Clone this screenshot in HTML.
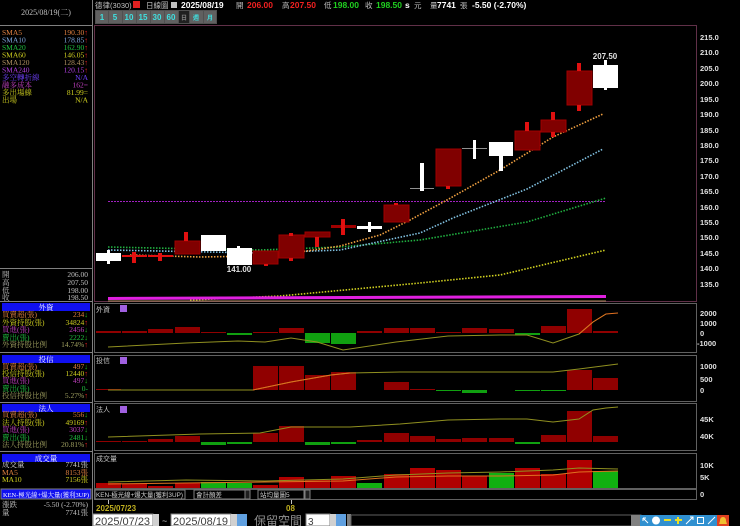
<!DOCTYPE html>
<html><head><meta charset="utf-8">
<style>
html,body{margin:0;padding:0;background:#000;width:740px;height:526px;overflow:hidden}
svg{display:block}
text{font-family:"Liberation Sans","Noto Sans CJK TC",sans-serif}
.lp text{font-family:"Liberation Serif","Noto Serif CJK SC",serif}
</style></head><body>
<svg width="740" height="526" viewBox="0 0 740 526" xmlns="http://www.w3.org/2000/svg">
<rect width="740" height="526" fill="#000"/>
<line x1="92.5" y1="0" x2="92.5" y2="526" stroke="#808080"/>
<g class="lp">
<text x="46" y="15" font-size="8" fill="#c0c0c0" text-anchor="middle">2025/08/19(二)</text>
<line x1="0" y1="25.5" x2="92" y2="25.5" stroke="#808080"/>
<g font-size="7.5">
<text x="2" y="35" fill="#e08040">SMA5</text><text x="88" y="35" fill="#e08040" text-anchor="end">190.30<tspan fill="#f02020">↑</tspan></text>
<text x="2" y="42.5" fill="#80a8e0">SMA10</text><text x="88" y="42.5" fill="#80a8e0" text-anchor="end">178.85<tspan fill="#f02020">↑</tspan></text>
<text x="2" y="50" fill="#20c040">SMA20</text><text x="88" y="50" fill="#20c040" text-anchor="end">162.90<tspan fill="#f02020">↑</tspan></text>
<text x="2" y="57.5" fill="#d0d020">SMA60</text><text x="88" y="57.5" fill="#d0d020" text-anchor="end">146.05<tspan fill="#f02020">↑</tspan></text>
<text x="2" y="65" fill="#b09060">SMA120</text><text x="88" y="65" fill="#b09060" text-anchor="end">128.43<tspan fill="#f02020">↑</tspan></text>
<text x="2" y="72.5" fill="#b040e0">SMA240</text><text x="88" y="72.5" fill="#b040e0" text-anchor="end">120.15<tspan fill="#f02020">↑</tspan></text>
<text x="2" y="80" fill="#7040ff">多空轉折線</text><text x="88" y="80" fill="#7040ff" text-anchor="end">N/A</text>
<text x="2" y="87.5" fill="#c040c0">融多成本</text><text x="88" y="87.5" fill="#c040c0" text-anchor="end">162=</text>
<text x="2" y="95" fill="#d0d020">多出場線</text><text x="88" y="95" fill="#d0d020" text-anchor="end">81.99=</text>
<text x="2" y="102.5" fill="#d0d020">出場</text><text x="88" y="102.5" fill="#d0d020" text-anchor="end">N/A</text>
</g>
<line x1="0" y1="268.5" x2="92" y2="268.5" stroke="#808080"/>
<g font-size="7.5" fill="#c0c0c0">
<text x="2" y="277">開</text><text x="88" y="277" text-anchor="end">206.00</text>
<text x="2" y="285">高</text><text x="88" y="285" text-anchor="end">207.50</text>
<text x="2" y="293">低</text><text x="88" y="293" text-anchor="end">198.00</text>
<text x="2" y="300">收</text><text x="88" y="300" text-anchor="end">198.50</text>
</g>
<g font-size="7.5">
<line x1="0" y1="301.5" x2="92" y2="301.5" stroke="#808080"/>
<rect x="2" y="303" width="88" height="8" fill="#1010f0"/><text x="46" y="310" fill="#fff" text-anchor="middle">外資</text>
<text x="2" y="317" fill="#e08040">買賣超(張)</text><text x="88" y="317" fill="#e08040" text-anchor="end">234<tspan fill="#20c020">↓</tspan></text>
<text x="2" y="325" fill="#d0d020">外資持股(張)</text><text x="88" y="325" fill="#d0d020" text-anchor="end">34824<tspan fill="#f02020">↑</tspan></text>
<text x="2" y="332" fill="#c040c0">買進(張)</text><text x="88" y="332" fill="#c040c0" text-anchor="end">2456<tspan fill="#20c020">↓</tspan></text>
<text x="2" y="340" fill="#20c040">賣出(張)</text><text x="88" y="340" fill="#20c040" text-anchor="end">2222<tspan fill="#20c020">↓</tspan></text>
<text x="2" y="347" fill="#a0a060">外資持股比例</text><text x="88" y="347" fill="#a0a060" text-anchor="end">14.74%<tspan fill="#f02020">↑</tspan></text>
<line x1="0" y1="352.5" x2="92" y2="352.5" stroke="#808080"/>
<rect x="2" y="355" width="88" height="8" fill="#1010f0"/><text x="46" y="362" fill="#fff" text-anchor="middle">投信</text>
<text x="2" y="369" fill="#e08040">買賣超(張)</text><text x="88" y="369" fill="#e08040" text-anchor="end">497<tspan fill="#20c020">↓</tspan></text>
<text x="2" y="376" fill="#d0d020">投信持股(張)</text><text x="88" y="376" fill="#d0d020" text-anchor="end">12440<tspan fill="#f02020">↑</tspan></text>
<text x="2" y="383" fill="#c040c0">買進(張)</text><text x="88" y="383" fill="#c040c0" text-anchor="end">497<tspan fill="#20c020">↓</tspan></text>
<text x="2" y="391" fill="#20c040">賣出(張)</text><text x="88" y="391" fill="#20c040" text-anchor="end">0-</text>
<text x="2" y="398" fill="#a0a060">投信持股比例</text><text x="88" y="398" fill="#a0a060" text-anchor="end">5.27%<tspan fill="#f02020">↑</tspan></text>
<line x1="0" y1="402.5" x2="92" y2="402.5" stroke="#808080"/>
<rect x="2" y="404" width="88" height="8" fill="#1010f0"/><text x="46" y="411" fill="#fff" text-anchor="middle">法人</text>
<text x="2" y="417" fill="#e08040">買賣超(張)</text><text x="88" y="417" fill="#e08040" text-anchor="end">556<tspan fill="#20c020">↓</tspan></text>
<text x="2" y="425" fill="#d0d020">法人持股(張)</text><text x="88" y="425" fill="#d0d020" text-anchor="end">49169<tspan fill="#f02020">↑</tspan></text>
<text x="2" y="432" fill="#c040c0">買進(張)</text><text x="88" y="432" fill="#c040c0" text-anchor="end">3037<tspan fill="#20c020">↓</tspan></text>
<text x="2" y="440" fill="#20c040">賣出(張)</text><text x="88" y="440" fill="#20c040" text-anchor="end">2481<tspan fill="#20c020">↓</tspan></text>
<text x="2" y="447" fill="#a0a060">法人持股比例</text><text x="88" y="447" fill="#a0a060" text-anchor="end">20.81%<tspan fill="#f02020">↑</tspan></text>
<line x1="0" y1="451.5" x2="92" y2="451.5" stroke="#808080"/>
<rect x="2" y="454" width="88" height="8" fill="#1010f0"/><text x="46" y="461" fill="#fff" text-anchor="middle">成交量</text>
<text x="2" y="467" fill="#d0d0d0">成交量</text><text x="88" y="467" fill="#d0d0d0" text-anchor="end">7741張</text>
<text x="2" y="475" fill="#e08040">MA5</text><text x="88" y="475" fill="#e08040" text-anchor="end">8153張</text>
<text x="2" y="482" fill="#d0d020">MA10</text><text x="88" y="482" fill="#d0d020" text-anchor="end">7156張</text>
<rect x="1" y="489" width="90" height="10" fill="#1010f0" stroke="#808080"/><text x="3" y="497" fill="#fff" font-size="6.5" textLength="86" lengthAdjust="spacingAndGlyphs">KEN-極光線+爆大量(獲利3UP)</text>
<text x="2" y="507" fill="#c0c0c0">漲跌</text><text x="88" y="507" fill="#c0c0c0" text-anchor="end">-5.50 (-2.70%)</text>
<text x="2" y="515" fill="#c0c0c0">量</text><text x="88" y="515" fill="#c0c0c0" text-anchor="end">7741張</text>
</g>
</g>
<g font-size="8.5" font-weight="bold">
<text x="95" y="8" fill="#c0c0c0" font-weight="normal" font-size="7.5">德律(3030)</text>
<rect x="133" y="1" width="7" height="7" fill="#e02020"/>
<text x="146" y="8" fill="#c0c0c0" font-weight="normal" font-size="7.5">日線圖</text>
<rect x="171" y="2" width="6" height="6" fill="#c0c0c0"/>
<text x="181" y="8" fill="#fff">2025/08/19</text>
<text x="236" y="8" fill="#c0c0c0" font-weight="normal" font-size="7.5">開</text><text x="247" y="8" fill="#f02020">206.00</text>
<text x="282" y="8" fill="#c0c0c0" font-weight="normal" font-size="7.5">高</text><text x="290" y="8" fill="#f02020">207.50</text>
<text x="324" y="8" fill="#c0c0c0" font-weight="normal" font-size="7.5">低</text><text x="333" y="8" fill="#20d020">198.00</text>
<text x="365" y="8" fill="#c0c0c0" font-weight="normal" font-size="7.5">收</text><text x="376" y="8" fill="#20d020">198.50</text>
<text x="405" y="8" fill="#fff">s</text><text x="414" y="8" fill="#c0c0c0" font-weight="normal" font-size="7.5">元</text>
<text x="430" y="8" fill="#c0c0c0" font-weight="normal" font-size="7.5">量</text><text x="437" y="8" fill="#fff">7741</text>
<text x="460" y="8" fill="#c0c0c0" font-weight="normal" font-size="7.5">張</text><text x="472" y="8" fill="#fff">-5.50 (-2.70%)</text>
</g>
<rect x="95" y="10" width="122" height="14" fill="#505050"/>
<g font-size="8" font-weight="bold" fill="#40e0e0" text-anchor="middle">
<rect x="96" y="11" width="12" height="12" fill="#606060"/><text x="102" y="20">1</text>
<rect x="109" y="11" width="13" height="12" fill="#606060"/><text x="115" y="20">5</text>
<rect x="123" y="11" width="13" height="12" fill="#606060"/><text x="129" y="20">10</text>
<rect x="137" y="11" width="13" height="12" fill="#606060"/><text x="143" y="20">15</text>
<rect x="151" y="11" width="13" height="12" fill="#606060"/><text x="157" y="20">30</text>
<rect x="165" y="11" width="13" height="12" fill="#606060"/><text x="171" y="20">60</text>
<rect x="179" y="11" width="10" height="12" fill="#202020"/><text x="184" y="20" fill="#808080" font-size="6">日</text>
<rect x="190" y="11" width="13" height="12" fill="#606060"/><text x="196" y="20" font-size="6">週</text>
<rect x="204" y="11" width="12" height="12" fill="#606060"/><text x="210" y="20" font-size="6">月</text>
</g>
<rect x="94.5" y="25.5" width="602" height="276" fill="none" stroke="#603048"/>
<rect x="94.5" y="303.5" width="602" height="49" fill="none" stroke="#606060"/>
<rect x="94.5" y="355.5" width="602" height="46" fill="none" stroke="#606060"/>
<rect x="94.5" y="403.5" width="602" height="47" fill="none" stroke="#606060"/>
<rect x="94.5" y="453.5" width="602" height="35" fill="none" stroke="#606060"/>
<rect x="94.5" y="489.5" width="602" height="10" fill="none" stroke="#606060"/>
<g font-size="7.5" font-weight="bold" fill="#e0e0e0">
<text x="700" y="40">215.0</text><text x="700" y="55">210.0</text><text x="700" y="71">205.0</text><text x="700" y="86">200.0</text><text x="700" y="102">195.0</text><text x="700" y="117">190.0</text><text x="700" y="133">185.0</text><text x="700" y="148">180.0</text><text x="700" y="163">175.0</text><text x="700" y="179">170.0</text><text x="700" y="194">165.0</text><text x="700" y="210">160.0</text><text x="700" y="225">155.0</text><text x="700" y="240">150.0</text><text x="700" y="256">145.0</text><text x="700" y="271">140.0</text><text x="700" y="287">135.0</text>
<text x="700" y="316">2000</text><text x="700" y="326">1000</text><text x="700" y="336">0</text><text x="697" y="346">-1000</text>
<text x="700" y="369">1000</text><text x="700" y="382">500</text><text x="700" y="393">0</text>
<text x="700" y="422">45K</text><text x="700" y="439">40K</text>
<text x="700" y="468">10K</text><text x="700" y="480">5K</text><text x="700" y="497">0</text>
</g>
<line x1="108" y1="201.5" x2="606" y2="201.5" stroke="#a020c0" stroke-dasharray="2 1"/>
<polyline fill="none" stroke="#d0d020" stroke-width="1.6" stroke-dasharray="1.5 1.5" points="190,300 280,296 420,283 500,275 606,250"/>
<polyline fill="none" stroke="#20b040" stroke-width="1.6" stroke-dasharray="1.5 1.5" points="108,247 200,249 260,250 340,247 420,240 527,222 606,198"/>
<polyline fill="none" stroke="#80c0e0" stroke-width="1.6" stroke-dasharray="1.5 1.5" points="108,250 260,253 340,250 420,233 453,218 527,189 603,149"/>
<polyline fill="none" stroke="#f0a040" stroke-width="1.6" stroke-dasharray="1.5 1.5" points="130,255 200,257 260,256 300,252 340,246 380,235 410,220 447,200 500,170 553,137 603,114"/>
<line x1="108" y1="298.5" x2="606" y2="296.5" stroke="#e020e0" stroke-width="3"/>
<line x1="108" y1="301" x2="606" y2="301" stroke="#b09060" stroke-width="1"/>
<g>
<rect x="96" y="253" width="25" height="8" fill="#fff"/><rect x="107" y="250" width="3" height="14" fill="#fff"/>
<rect x="122" y="255" width="25" height="2" fill="#e01010"/><rect x="132" y="252" width="4" height="11" fill="#e01010"/>
<rect x="148" y="255" width="25" height="2" fill="#e01010"/><rect x="158" y="253" width="4" height="8" fill="#e01010"/>
<rect x="175" y="241" width="25" height="13" fill="#800000" stroke="#a00000"/><rect x="184" y="232" width="4" height="9" fill="#e01010"/>
<rect x="201" y="235" width="25" height="16" fill="#fff"/>
<rect x="227" y="248" width="25" height="17" fill="#fff"/><rect x="237" y="246" width="3" height="3" fill="#fff"/>
<text x="239" y="272" font-size="8" font-weight="bold" fill="#e0e0e0" text-anchor="middle">141.00</text>
<rect x="253" y="251" width="25" height="13" fill="#800000" stroke="#a00000"/><rect x="264" y="264" width="4" height="2" fill="#e01010"/>
<rect x="279" y="235" width="25" height="23" fill="#800000" stroke="#a00000"/><rect x="289" y="233" width="4" height="3" fill="#e01010"/><rect x="289" y="258" width="4" height="3" fill="#e01010"/>
<rect x="305" y="232" width="25" height="5" fill="#800000" stroke="#a00000"/><rect x="315" y="237" width="4" height="10" fill="#e01010"/>
<rect x="331" y="225" width="25" height="3" fill="#a00000"/><rect x="341" y="219" width="4" height="16" fill="#e01010"/>
<rect x="357" y="226" width="25" height="3" fill="#fff"/><rect x="368" y="222" width="3" height="10" fill="#fff"/>
<rect x="384" y="205" width="25" height="17" fill="#800000" stroke="#a00000"/><rect x="394" y="203" width="4" height="2" fill="#e01010"/>
<line x1="410" y1="188.5" x2="434" y2="188.5" stroke="#909090"/><rect x="420" y="163" width="4" height="28" fill="#fff"/>
<rect x="436" y="149" width="25" height="37" fill="#800000" stroke="#a00000"/><rect x="446" y="186" width="4" height="3" fill="#e01010"/>
<line x1="462" y1="148.5" x2="487" y2="148.5" stroke="#909090"/><rect x="473" y="140" width="3" height="19" fill="#fff"/>
<rect x="489" y="142" width="24" height="14" fill="#fff"/><rect x="499" y="156" width="4" height="15" fill="#fff"/>
<rect x="515" y="131" width="25" height="19" fill="#800000" stroke="#a00000"/><rect x="525" y="122" width="4" height="9" fill="#e01010"/>
<rect x="541" y="120" width="25" height="12" fill="#800000" stroke="#a00000"/><rect x="551" y="112" width="4" height="8" fill="#e01010"/><rect x="551" y="132" width="4" height="5" fill="#e01010"/>
<rect x="567" y="71" width="25" height="34" fill="#800000" stroke="#a00000"/><rect x="577" y="63" width="4" height="8" fill="#e01010"/><rect x="577" y="105" width="4" height="6" fill="#e01010"/>
<rect x="593" y="65" width="25" height="23" fill="#fff"/><rect x="604" y="60" width="3" height="30" fill="#fff"/>
<text x="605" y="59" font-size="8" font-weight="bold" fill="#e0e0e0" text-anchor="middle">207.50</text>
</g>
<g font-size="7" fill="#c0c0c0">
<text x="96" y="312">外資</text><rect x="120" y="305" width="7" height="7" fill="#a060e0"/>
<text x="96" y="363">投信</text><rect x="120" y="357" width="7" height="7" fill="#a060e0"/>
<text x="96" y="412">法人</text><rect x="120" y="406" width="7" height="7" fill="#a060e0"/>
<text x="96" y="461">成交量</text>
</g>
<g fill="#900000">
<rect x="96" y="331" width="25" height="2"/><rect x="122" y="331" width="25" height="2"/><rect x="148" y="329" width="25" height="4"/><rect x="175" y="327" width="25" height="6"/><rect x="201" y="332" width="25" height="1"/>
<rect x="253" y="332" width="25" height="1"/><rect x="279" y="328" width="25" height="5"/><rect x="357" y="331" width="25" height="2"/><rect x="384" y="328" width="25" height="5"/><rect x="410" y="328" width="25" height="5"/><rect x="436" y="332" width="25" height="1"/><rect x="462" y="328" width="25" height="5"/><rect x="489" y="329" width="25" height="4"/><rect x="541" y="326" width="25" height="7"/><rect x="567" y="309" width="25" height="24"/><rect x="593" y="331" width="25" height="2"/>
</g>
<g fill="#10a010">
<rect x="227" y="333" width="25" height="2"/><rect x="305" y="333" width="25" height="10"/><rect x="331" y="333" width="25" height="11"/><rect x="515" y="333" width="25" height="2"/>
</g>
<polyline fill="none" stroke="#909020" points="108,347 186,343 238,341 265,342 291,338 317,342 343,350 396,342 448,336 500,335 527,335 553,343 579,334 593,322 606,314"/>
<polyline fill="none" stroke="#e07020" points="579,334 593,322 606,314 618,313"/>
<g fill="#900000">
<rect x="253" y="366" width="25" height="24"/><rect x="279" y="366" width="25" height="24"/><rect x="305" y="375" width="25" height="15"/><rect x="331" y="372" width="25" height="18"/><rect x="384" y="382" width="25" height="8"/><rect x="410" y="389" width="25" height="1"/><rect x="567" y="370" width="25" height="20"/><rect x="593" y="378" width="25" height="12"/>
<rect x="96" y="389" width="25" height="1"/>
</g>
<g fill="#10a010">
<rect x="436" y="390" width="25" height="1"/><rect x="462" y="390" width="25" height="3"/><rect x="515" y="390" width="25" height="1"/><rect x="541" y="390" width="25" height="1"/>
</g>
<polyline fill="none" stroke="#909020" points="108,390 227,390 253,390 291,382 331,375 350,373 400,372 553,372 579,369 618,364"/>
<polyline fill="none" stroke="#e07020" points="253,390 291,382 331,375 350,373"/>
<g fill="#900000">
<rect x="96" y="441" width="25" height="1"/><rect x="122" y="441" width="25" height="1"/><rect x="148" y="439" width="25" height="3"/><rect x="175" y="436" width="25" height="6"/>
<rect x="253" y="433" width="25" height="9"/><rect x="279" y="426" width="25" height="16"/><rect x="357" y="440" width="25" height="2"/><rect x="384" y="433" width="25" height="9"/><rect x="410" y="436" width="25" height="6"/><rect x="436" y="439" width="25" height="3"/><rect x="462" y="438" width="25" height="4"/><rect x="489" y="438" width="25" height="4"/><rect x="541" y="435" width="25" height="7"/><rect x="567" y="411" width="25" height="31"/><rect x="593" y="436" width="25" height="6"/>
</g>
<g fill="#10a010">
<rect x="201" y="442" width="25" height="3"/><rect x="227" y="442" width="25" height="2"/><rect x="305" y="442" width="25" height="3"/><rect x="331" y="442" width="25" height="2"/><rect x="515" y="442" width="25" height="2"/>
</g>
<polyline fill="none" stroke="#909020" points="108,437 200,434 260,433 291,427 350,427 400,424 448,420 500,419 527,419 553,422 579,419 593,410 606,408 618,407"/>
<g fill="#b00000">
<rect x="96" y="483" width="25" height="5"/><rect x="122" y="484" width="25" height="4"/><rect x="148" y="486" width="25" height="2"/><rect x="175" y="483" width="25" height="5"/>
<rect x="253" y="485" width="25" height="3"/><rect x="279" y="477" width="25" height="11"/><rect x="305" y="480" width="25" height="8"/><rect x="331" y="476" width="25" height="12"/><rect x="384" y="474" width="25" height="14"/><rect x="410" y="468" width="25" height="20"/><rect x="436" y="470" width="25" height="18"/><rect x="462" y="476" width="25" height="12"/><rect x="515" y="468" width="25" height="20"/><rect x="541" y="474" width="25" height="14"/><rect x="567" y="460" width="25" height="28"/>
</g>
<g fill="#10b010">
<rect x="201" y="482" width="25" height="6"/><rect x="227" y="483" width="25" height="5"/><rect x="357" y="483" width="25" height="5"/><rect x="489" y="473" width="25" height="15"/><rect x="593" y="471" width="25" height="17"/>
</g>
<polyline fill="none" stroke="#909020" points="108,482 186,480 265,481 343,479 396,475 448,473 500,472 553,470 579,468 618,469"/>
<polyline fill="none" stroke="#e07020" points="108,484 186,483 265,482 343,481 396,477 448,476 500,476 553,475 579,472 618,471"/>
<g font-size="6.5" fill="#d0d0d0">
<rect x="95" y="490" width="90" height="9" fill="#000" stroke="#808080"/><text x="96" y="497" textLength="87" lengthAdjust="spacingAndGlyphs">KEN-極光線+爆大量(獲利3UP)</text>
<rect x="194" y="490" width="51" height="9" fill="#000" stroke="#808080"/><text x="196" y="497">會計顏差</text><rect x="245" y="490" width="5" height="9" fill="#202020" stroke="#808080"/>
<rect x="258" y="490" width="46" height="9" fill="#000" stroke="#808080"/><text x="260" y="497">站均量圖5</text><rect x="305" y="490" width="5" height="9" fill="#202020" stroke="#808080"/>
</g>
<line x1="108.5" y1="500" x2="108.5" y2="504" stroke="#c0c0c0"/><line x1="291.5" y1="500" x2="291.5" y2="504" stroke="#c0c0c0"/>
<text x="96" y="511" font-size="8" font-weight="bold" fill="#c0b020">2025/07/23</text>
<text x="286" y="511" font-size="8" font-weight="bold" fill="#c0b020">08</text>
<rect x="93" y="514" width="60" height="12" fill="#fff" stroke="#808080"/><text x="95" y="525" font-size="11" fill="#404040">2025/07/23</text>
<rect x="153" y="514" width="6" height="12" fill="#d0d0d0"/>
<text x="162" y="524" font-size="9" fill="#c0c0c0">~</text>
<rect x="171" y="514" width="60" height="12" fill="#fff" stroke="#808080"/><text x="173" y="525" font-size="11" fill="#404040">2025/08/19</text>
<rect x="231" y="514" width="6" height="12" fill="#d0d0d0"/>
<rect x="237" y="514" width="10" height="12" fill="#60a0e0"/>
<text x="254" y="525" font-size="12" fill="#909090">保留空間</text>
<rect x="306" y="514" width="24" height="12" fill="#fff" stroke="#808080"/><text x="308" y="525" font-size="10" fill="#404040">3</text>
<rect x="330" y="514" width="6" height="12" fill="#d0d0d0"/>
<rect x="336" y="514" width="10" height="12" fill="#60a0e0"/>
<rect x="347" y="514" width="4" height="12" fill="#808080"/>
<rect x="351" y="515" width="290" height="11" fill="#000" stroke="#606060"/>
<rect x="631" y="515" width="9" height="11" fill="#808080"/>
<g>
<rect x="640" y="515" width="11" height="11" fill="#3090d0"/><path d="M643 518 l5 5 M643 518 h3 M643 518 v3" stroke="#fff" fill="none"/>
<rect x="651" y="515" width="11" height="11" fill="#3090d0"/><circle cx="656" cy="520.5" r="4" fill="#fff"/>
<rect x="662" y="515" width="11" height="11" fill="#3090d0"/><rect x="664" y="519" width="7" height="2" fill="#f0e020"/>
<rect x="673" y="515" width="11" height="11" fill="#3090d0"/><rect x="675" y="519" width="7" height="2" fill="#f0e020"/><rect x="677" y="517" width="2" height="7" fill="#f0e020"/>
<rect x="684" y="515" width="11" height="11" fill="#3090d0"/><path d="M686 524 l7 -7 M690 517 h3 v3" stroke="#fff" fill="none"/>
<rect x="695" y="515" width="11" height="11" fill="#3090d0"/><rect x="697.5" y="517.5" width="6" height="6" stroke="#fff" fill="none"/>
<rect x="706" y="515" width="11" height="11" fill="#3090d0"/><path d="M708 524 l7 -7" stroke="#fff"/>
<rect x="717" y="515" width="12" height="11" fill="#e04020"/><path d="M723 517 q-3 0 -3 4 l-1 3 h8 l-1 -3 q0 -4 -3 -4z" fill="#f0c030"/>
</g>
</svg>
</body></html>
